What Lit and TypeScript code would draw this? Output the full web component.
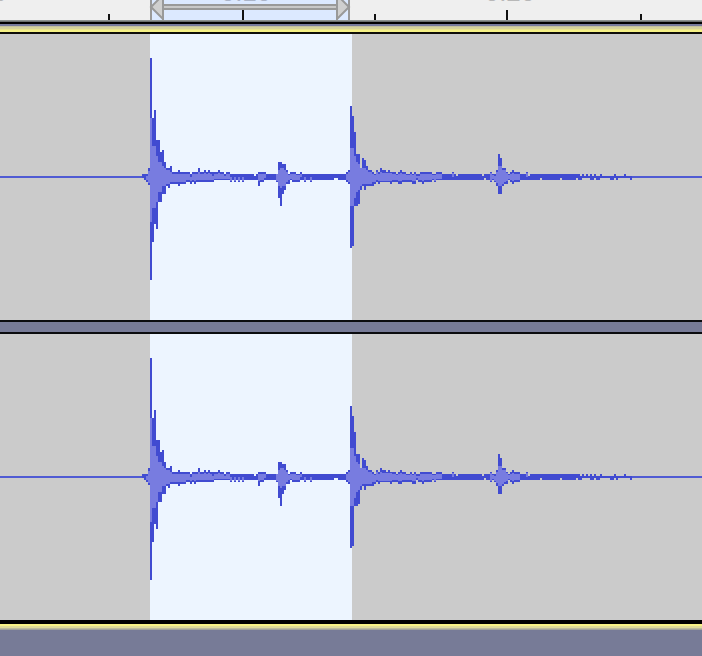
import { LitElement, html, css, svg } from "lit";
import { customElement } from "lit/decorators.js";

// Each step: [x, peak above axis, peak below axis, RMS above, RMS below].
// A step holds until the x of the next one; the axis is at AXIS.
type Step = [number, number, number, number, number];
const AXIS = 143;
const HEIGHT = 286;

const steps: Step[] = [
  [142, 3, 1, 0, 0], [144, 3, 3, 0, 0], [146, 3, 5, 1, 3], [148, 9, 8, 6, 6],
  [150, 119, 103, 59, 45], [152, 59, 65, 31, 31], [154, 67, 47, 31, 31],
  [156, 37, 52, 21, 25], [158, 37, 25, 15, 15], [160, 25, 25, 15, 15],
  [162, 27, 17, 11, 9], [164, 15, 17, 9, 9], [166, 9, 9, 7, 7],
  [168, 9, 11, 7, 7], [170, 11, 7, 5, 5], [172, 5, 7, 3, 5],
  [178, 7, 9, 3, 5], [180, 5, 7, 3, 5], [186, 5, 5, 3, 3], [190, 3, 7, 0, 4],
  [192, 5, 5, 3, 3], [194, 5, 7, 3, 4], [196, 5, 5, 3, 3],
  [198, 9, 5, 5, 3], [200, 5, 5, 3, 3], [204, 7, 5, 4, 3], [206, 5, 5, 3, 3],
  [208, 7, 5, 4, 3], [210, 5, 5, 3, 3], [212, 5, 5, 1, 3], [214, 5, 3, 3, 2],
  [218, 7, 3, 4, 2], [220, 5, 3, 3, 2], [224, 3, 3, 1, 2], [226, 5, 3, 3, 2],
  [230, 3, 5, 0, 4], [232, 3, 3, 0, 0], [234, 3, 5, 0, 4], [236, 3, 3, 0, 0],
  [238, 3, 5, 0, 4], [240, 3, 3, 0, 0], [242, 3, 5, 0, 4], [244, 3, 3, 0, 0],
  [254, 1, 3, 0, 0], [256, 3, 3, 0, 0], [258, 5, 9, 3, 4], [260, 5, 5, 3, 3],
  [264, 5, 3, 3, 1], [266, 3, 3, 0, 0], [276, 3, 5, 3, 4], [278, 15, 21, 7, 9],
  [280, 15, 29, 9, 11], [282, 13, 17, 9, 9], [284, 13, 13, 7, 9],
  [286, 7, 7, 5, 5], [288, 3, 7, 2, 3], [290, 5, 3, 3, 2], [292, 5, 5, 3, 3],
  [296, 3, 5, 2, 3], [300, 5, 3, 3, 0], [302, 3, 3, 0, 0], [304, 3, 5, 0, 4],
  [306, 3, 3, 0, 0], [310, 3, 5, 0, 4], [312, 3, 3, 0, 0], [334, 3, 1, 0, 0],
  [338, 3, 3, 0, 0], [346, 5, 5, 3, 3], [348, 7, 7, 5, 5],
  [350, 71, 71, 29, 29], [352, 61, 69, 29, 29], [354, 45, 29, 21, 21],
  [356, 23, 29, 15, 15], [358, 23, 27, 13, 13], [360, 9, 13, 9, 9],
  [362, 19, 9, 9, 7], [364, 17, 13, 9, 7], [366, 11, 9, 7, 7],
  [368, 7, 9, 5, 7], [372, 5, 9, 3, 5], [374, 3, 7, 2, 5], [376, 7, 5, 5, 3],
  [378, 5, 7, 3, 4], [380, 9, 5, 5, 4], [382, 7, 5, 4, 4], [386, 5, 5, 4, 4],
  [388, 7, 5, 4, 4], [390, 5, 7, 4, 4], [392, 5, 5, 3, 3], [396, 3, 5, 2, 3],
  [398, 5, 7, 3, 4], [400, 7, 7, 4, 4], [402, 5, 5, 3, 3], [406, 3, 5, 2, 3],
  [410, 5, 5, 3, 3], [412, 3, 7, 2, 4], [414, 5, 7, 3, 4], [416, 3, 3, 1, 1],
  [418, 3, 5, 1, 3], [420, 5, 5, 3, 3], [422, 5, 7, 3, 4], [424, 5, 5, 3, 3],
  [432, 3, 3, 2, 2], [434, 3, 5, 2, 4], [436, 5, 3, 3, 2], [442, 3, 3, 0, 0],
  [452, 5, 3, 4, 0], [454, 3, 3, 0, 0], [456, 1, 3, 0, 0], [458, 3, 3, 0, 0],
  [482, 1, 3, 0, 0], [484, 3, 1, 0, 0], [486, 3, 3, 0, 0], [490, 5, 5, 4, 4],
  [492, 3, 3, 2, 2], [494, 3, 5, 1, 4], [496, 7, 9, 5, 6],
  [498, 23, 17, 11, 9], [500, 19, 17, 11, 9], [502, 9, 9, 7, 7],
  [504, 9, 7, 7, 5], [506, 5, 7, 4, 4], [508, 3, 3, 2, 2],
  [510, 5, 5, 3, 3], [512, 7, 7, 4, 4], [514, 5, 5, 3, 3], [520, 3, 3, 0, 0],
  [526, 5, 3, 4, 0], [528, 1, 3, 0, 0], [530, 3, 3, 0, 0], [540, 3, 1, 0, 0],
  [542, 3, 3, 0, 0], [560, 3, 1, 0, 0], [562, 3, 3, 0, 0], [576, 3, 1, 0, 0],
  [578, 3, 3, 0, 0], [580, 1, 3, 0, 0], [582, 3, 1, 0, 0], [584, 1, 1, 0, 0],
  [586, 3, 1, 0, 0], [588, 1, 1, 0, 0], [590, 3, 3, 0, 0], [592, 1, 3, 0, 0],
  [594, 3, 1, 0, 0], [596, 1, 3, 0, 0], [600, 3, 1, 0, 0], [602, 1, 1, 0, 0],
  [610, 1, 3, 0, 0], [614, 3, 1, 0, 0], [616, 1, 3, 0, 0], [618, 1, 1, 0, 0],
  [624, 3, 1, 0, 0], [626, 1, 1, 0, 0], [630, 1, 3, 0, 0], [632, 0, 0, 0, 0],
];

// Closed stepped outline from the given upper and lower columns.
function envelope(up: number, down: number): string {
  const next = (i: number) => (steps[i + 1] ?? steps[i])[0];
  const top = steps.map((s, i) => `L${s[0]} ${AXIS - s[up]}H${next(i)}`);
  const low = steps.map((s, i) => `L${next(i)} ${AXIS + s[down]}H${s[0]}`);
  return `M${steps[0][0]} ${AXIS}` + top.join("") + low.reverse().join("") + "Z";
}
const PEAK = envelope(1, 2);
const RMS = envelope(3, 4);

@customElement("wave-track")
class WaveTrack extends LitElement {
  static styles = css`
    :host { display: grid; grid-template-columns: 150px 202px 1fr; background: #cbcbcb; overflow: hidden; }
    .selection { grid-area: 1 / 2; background: #edf5ff; }
    .wave { grid-area: 1 / 1 / 2 / 4; display: block; width: 100%; height: 286px; }
    .axis { fill: #505bd3; }
    .peak { fill: #414bd1; }
    .rms { fill: #787ce0; }
  `;
  render() {
    return html`
      <div class="selection"></div>
      <svg class="wave" height=${HEIGHT} role="img" aria-label="Waveform" shape-rendering="crispEdges">
        ${svg`
          <rect class="axis" y=${AXIS - 1} width="100%" height="2"></rect>
          <path class="peak" d=${PEAK}></path>
          <path class="rms" d=${RMS}></path>`}
      </svg>`;
  }
}

@customElement("time-ruler")
class TimeRuler extends LitElement {
  static styles = css`
    :host { display: block; background: #efefef; overflow: hidden; }
    .scale { display: block; width: 100%; height: 20px; }
    .region { fill: #dce9ff; }
    .edge { fill: #999; }
    .bar { fill: #c8c8c8; }
    .handle { fill: #cfcfcf; stroke: #999; stroke-width: 2; }
    .tick { fill: #111; }
    .label { font: 26px "Liberation Sans", Arial, sans-serif; fill: #b8b8b8; text-anchor: middle; }
    .picked { fill: #aab4c8; }
  `;
  render() {
    return html`<svg class="scale">
      ${svg`
        <g shape-rendering="crispEdges">
          <rect class="region" x="150" width="200" height="20"></rect>
        </g>
        <text class="label" x="-18" y="1">0.00</text>
        <text class="label picked" x="246" y="1">0.10</text>
        <text class="label" x="510" y="1">0.20</text>
        <g shape-rendering="crispEdges">
          <rect class="edge" x="162" y="4" width="176" height="6"></rect>
          <rect class="bar" x="164" y="6" width="172" height="2"></rect>
        </g>
        <path class="handle" d="M163 -5 151 7 163 19ZM337 -5 349 7 337 19Z"></path>
        <g shape-rendering="crispEdges">
          <rect class="edge" x="150" width="2" height="20"></rect>
          <rect class="edge" x="162" width="2" height="20"></rect>
          <rect class="edge" x="336" width="2" height="20"></rect>
          <rect class="edge" x="348" width="2" height="20"></rect>
          ${[[108, 6], [242, 10], [374, 6], [506, 10], [640, 6]].map(
            ([x, h]) => svg`<rect class="tick" x=${x} y=${20 - h} width="2" height=${h}></rect>`)}
        </g>`}
    </svg>`;
  }
}

@customElement("app-root")
class AppRoot extends LitElement {
  static styles = css`
    :host { display: flex; flex-direction: column; min-height: 100vh; background: #777b97; }
    .top {
      height: 14px;
      background: linear-gradient(#8d9391 0 1px, #6b706e 1px 2px, #000 2px 4px, #777b9c 4px 6px,
        #c3c19c 6px 7px, #d5d39b 7px 9px, #e8e48d 9px 10px, #f7f285 10px 12px, #100f08 12px 14px);
    }
    .divider { height: 8px; border: solid #0b0c0f; border-width: 2px 0; padding: 1px 0; background: #777b97; }
    .bottom {
      height: 10px;
      background: linear-gradient(#000 0 4px, #f7f285 4px 6px, #dedb97 6px 8px, #bcbb9b 8px 9px, #a2a398 9px 10px);
    }
  `;
  render() {
    return html`
      <time-ruler></time-ruler>
      <div class="top"></div>
      <wave-track></wave-track>
      <div class="divider"></div>
      <wave-track></wave-track>
      <div class="bottom"></div>`;
  }
}
